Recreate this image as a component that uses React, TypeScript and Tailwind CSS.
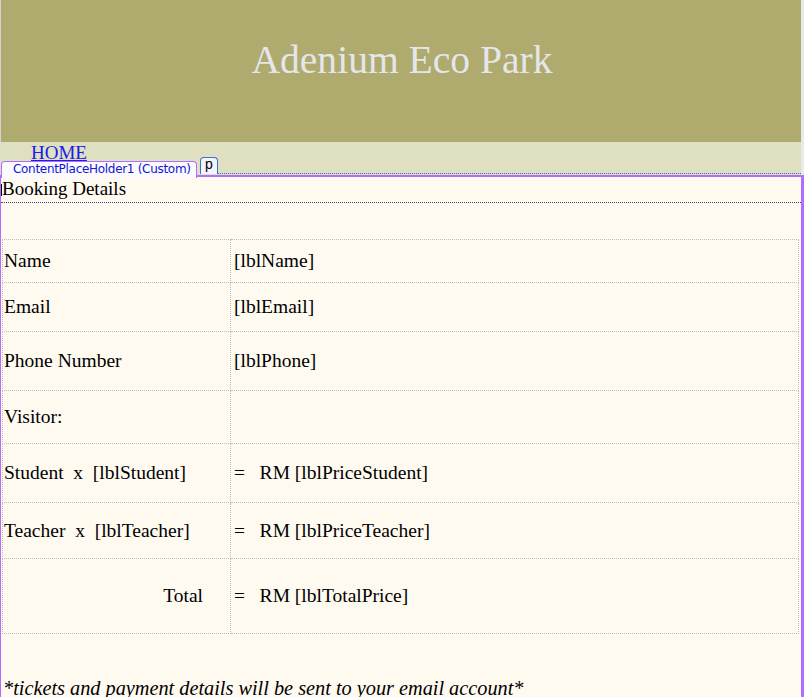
import React from 'react';

const serif = { fontFamily: '"Liberation Serif", "Times New Roman", serif' };
const tahoma = { fontFamily: '"DejaVu Sans", Tahoma, sans-serif' };

const rows = [
  { h: 'h-[43px]', left: 'Name', right: '[lblName]' },
  { h: 'h-[49px]', left: 'Email', right: '[lblEmail]' },
  { h: 'h-[59px]', left: 'Phone Number', right: '[lblPhone]' },
  { h: 'h-[53px]', left: 'Visitor:', right: '' },
  { h: 'h-[59px]', left: 'Student\u00a0 x\u00a0 [lblStudent]', right: '=\u00a0\u00a0 RM [lblPriceStudent]' },
  { h: 'h-[56px]', left: 'Teacher\u00a0 x\u00a0 [lblTeacher]', right: '=\u00a0\u00a0 RM [lblPriceTeacher]' },
];

export default function App() {
  return (
    <div className="w-[804px] h-[697px] overflow-hidden bg-[#e9e9e9] flex flex-col" style={serif}>
      {/* banner */}
      <div className="w-[801px] h-[142px] shrink-0 bg-[#afaa6d] border-l border-[#d4d4d4] flex items-center justify-center">
        <h1 className="text-[39.6px] text-[#e4e6ea] leading-none -mt-[20px] pl-[2px]">Adenium Eco Park</h1>
      </div>

      {/* menu strip */}
      <div className="relative w-[801px] h-[33px] shrink-0 bg-[#dfdfc1]">
        <a href="#" className="absolute left-[31px] top-[1px] text-[19px] leading-[20px] text-[#1a1aee] underline">
          HOME
        </a>
        <div className="absolute left-[217px] right-0 top-[31px] border-t border-dotted border-[#2f6fd0]" />
        <div
          className="absolute left-[1px] top-[19px] w-[196px] h-[17px] bg-[#fbfaff] border border-b-0 border-[#b46cff] rounded-t-[4px] text-[12px] leading-[15px] text-[#1515d0] pl-[11px] z-10 whitespace-nowrap tracking-[-0.3px]"
          style={tahoma}
        >
          ContentPlaceHolder1 (Custom)
        </div>
        <div
          className="absolute left-[200px] top-[15px] w-[18px] h-[17px] bg-[#f4f4ff] border border-b-0 border-[#3f6fc6] rounded-t-[4px] text-[14px] leading-[12px] text-black text-center"
          style={{ fontFamily: '"Liberation Sans", Arial, sans-serif' }}
        >
          p
        </div>
      </div>

      {/* content placeholder */}
      <div className="w-[804px] flex-1 bg-[#fffaf0] border-t-2 border-l border-r-[3px] border-[#b46cff] flex flex-col">
        <div className="h-[26px] border-b border-dotted border-[#40407a] flex items-center">
          <span className="w-px h-[12px] bg-black" />
          <span className="text-[19px] leading-none -mt-[3px]">Booking Details</span>
        </div>
        <div className="h-[36px]" />
        <table className="w-[797px] ml-[1px] border-collapse text-[19.5px] text-black">
          <tbody>
            {rows.map((r) => (
              <tr key={r.left} className={r.h}>
                <td className="w-[228px] border border-dotted border-[#bdbdbd] pl-[1px] align-middle whitespace-nowrap">
                  {r.left}
                </td>
                <td className="border border-dotted border-[#bdbdbd] pl-[3px] align-middle whitespace-nowrap">
                  {r.right}
                </td>
              </tr>
            ))}
            <tr className="h-[75px]">
              <td className="w-[228px] border border-dotted border-[#bdbdbd] pr-[27px] text-right align-middle">Total</td>
              <td className="border border-dotted border-[#bdbdbd] pl-[3px] align-middle whitespace-nowrap">
                {'=\u00a0\u00a0 RM [lblTotalPrice]'}
              </td>
            </tr>
          </tbody>
        </table>
        <div className="h-[42px]" />
        <p className="pl-[2px] text-[20.3px] leading-[24px] italic whitespace-nowrap">
          *tickets and payment details will be sent to your email account*
        </p>
      </div>
    </div>
  );
}
